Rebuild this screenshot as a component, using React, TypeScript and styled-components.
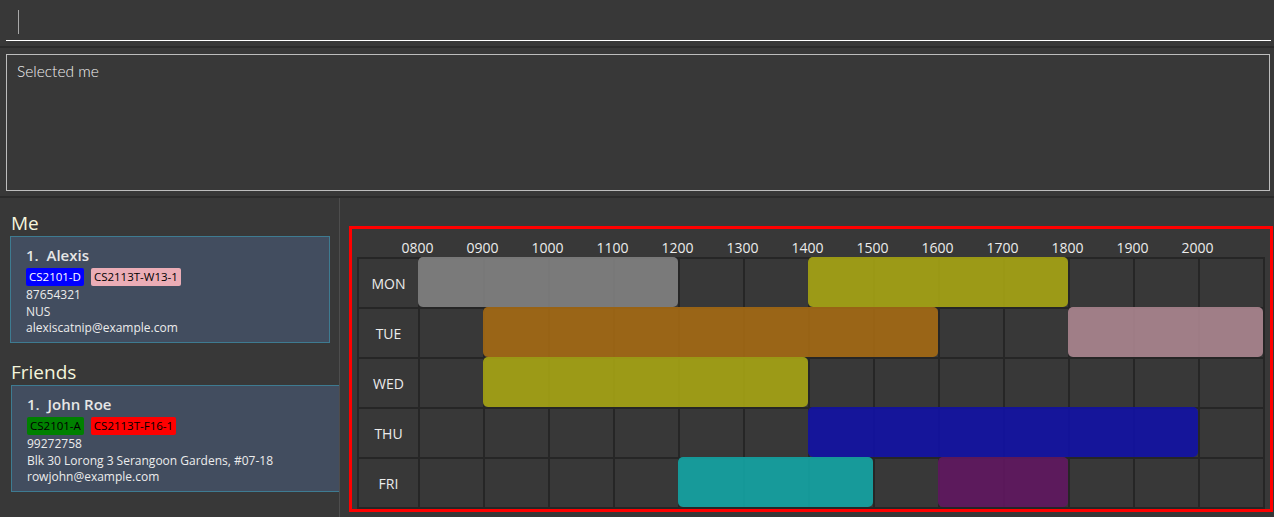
import React from "react";
import styled, { createGlobalStyle } from "styled-components";

interface Lesson {
  day: number;
  start: number;
  end: number;
  color: string;
}

interface Person {
  name: string;
  tags: { label: string; bg: string; fg: string }[];
  lines: string[];
}

const days = ["MON", "TUE", "WED", "THU", "FRI"];
const hours = [8, 9, 10, 11, 12, 13, 14, 15, 16, 17, 18, 19, 20];

const lessons: Lesson[] = [
  { day: 0, start: 8, end: 12, color: "rgba(130, 130, 130, 0.9)" },
  { day: 0, start: 14, end: 18, color: "rgba(167, 165, 20, 0.9)" },
  { day: 1, start: 9, end: 16, color: "rgba(165, 106, 20, 0.9)" },
  { day: 1, start: 18, end: 21, color: "rgba(172, 134, 144, 0.9)" },
  { day: 2, start: 9, end: 14, color: "rgba(167, 165, 20, 0.9)" },
  { day: 3, start: 14, end: 20, color: "rgba(18, 18, 165, 0.9)" },
  { day: 4, start: 12, end: 15, color: "rgba(20, 165, 165, 0.9)" },
  { day: 4, start: 16, end: 18, color: "rgba(96, 23, 96, 0.9)" },
];

const me: Person = {
  name: "Alexis",
  tags: [
    { label: "CS2101-D", bg: "#0000ff", fg: "#ffffff" },
    { label: "CS2113T-W13-1", bg: "#ebadb6", fg: "#000000" },
  ],
  lines: ["87654321", "NUS", "alexiscatnip@example.com"],
};

const friends: Person[] = [
  {
    name: "John Roe",
    tags: [
      { label: "CS2101-A", bg: "#008000", fg: "#000000" },
      { label: "CS2113T-F16-1", bg: "#ff0000", fg: "#000000" },
    ],
    lines: [
      "99272758",
      "Blk 30 Lorong 3 Serangoon Gardens, #07-18",
      "rowjohn@example.com",
    ],
  },
];

const pad = (h: number) => (h < 10 ? "0" + h : "" + h) + "00";

const PersonCard: React.FC<{ person: Person; index: number; wide?: boolean }> = ({
  person,
  index,
  wide,
}) => (
  <Card $wide={wide}>
    <Name>
      {index}.&nbsp;&nbsp;{person.name}
    </Name>
    <Tags>
      {person.tags.map((t) => (
        <Tag key={t.label} $bg={t.bg} $fg={t.fg}>
          {t.label}
        </Tag>
      ))}
    </Tags>
    {person.lines.map((l) => (
      <Detail key={l}>{l}</Detail>
    ))}
  </Card>
);

const App: React.FC = () => {
  return (
    <>
      <GlobalStyle />
      <Window>
        <CommandPane>
          <CommandField>
            <Caret />
          </CommandField>
        </CommandPane>
        <Separator />
        <ResultPane>
          <ResultBox>Selected me</ResultBox>
        </ResultPane>
        <Separator />
        <Split>
          <LeftPane>
            <SectionTitle>Me</SectionTitle>
            <PersonCard person={me} index={1} />
            <SectionTitle $gap>Friends</SectionTitle>
            {friends.map((f, i) => (
              <PersonCard key={f.name} person={f} index={i + 1} wide />
            ))}
          </LeftPane>
          <RightPane>
            <Timetable>
              <HourRow>
                {hours.map((h) => (
                  <HourLabel key={h}>{pad(h)}</HourLabel>
                ))}
              </HourRow>
              <Grid>
                {days.map((d, r) => (
                  <React.Fragment key={d}>
                    <DayCell style={{ gridRow: r + 1, gridColumn: 1 }}>{d}</DayCell>
                    {hours.map((h, c) => (
                      <Cell key={h} style={{ gridRow: r + 1, gridColumn: c + 2 }} />
                    ))}
                  </React.Fragment>
                ))}
                {lessons.map((l, i) => (
                  <LessonBlock
                    key={i}
                    style={{
                      gridRow: l.day + 1,
                      gridColumn: `${l.start - 6} / ${l.end - 6}`,
                      background: l.color,
                    }}
                  />
                ))}
              </Grid>
            </Timetable>
          </RightPane>
        </Split>
      </Window>
    </>
  );
};

export default App;

const GlobalStyle = createGlobalStyle`
  html, body {
    margin: 0;
    padding: 0;
    background: #383838;
  }
  body {
    font-family: "Open Sans", "Noto Sans", sans-serif;
    color: #ececec;
  }
`;

const Window = styled.div`
  width: 1274px;
  height: 517px;
  display: flex;
  flex-direction: column;
  background: #383838;
  overflow: hidden;
`;

const CommandPane = styled.div`
  height: 46px;
  padding: 0 3px 0 6px;
`;

const CommandField = styled.div`
  height: 41px;
  border-bottom: 1px solid #ffffff;
  padding: 10px 0 0 12px;
  box-sizing: border-box;
`;

const Caret = styled.div`
  width: 1px;
  height: 24px;
  background: #a8a8a8;
`;

const Separator = styled.div`
  height: 2px;
  background: #2b2b2b;
`;

const ResultPane = styled.div`
  height: 148px;
  padding: 6px 4px 0 6px;
  box-sizing: border-box;
`;

const ResultBox = styled.div`
  height: 137px;
  box-sizing: border-box;
  border: 1px solid #bdbdbd;
  padding: 7px 10px;
  font-family: "Lato", "Open Sans", sans-serif;
  font-weight: 300;
  font-size: 15.5px;
  color: #f2f2f2;
`;

const Split = styled.div`
  flex: 1;
  display: flex;
  min-height: 0;
`;

const LeftPane = styled.div`
  width: 340px;
  flex: none;
  border-right: 1px solid #4d4d4d;
  overflow: hidden;
  padding: 12px 0 0 10px;
  box-sizing: border-box;
`;

const SectionTitle = styled.div<{ $gap?: boolean }>`
  font-size: 19px;
  line-height: 26px;
  color: #f5f5dc;
  padding-left: 1px;
  margin-top: ${(p) => (p.$gap ? "16px" : "0")};
`;

const Card = styled.div<{ $wide?: boolean }>`
  width: ${(p) => (p.$wide ? "340px" : "320px")};
  margin-left: ${(p) => (p.$wide ? "1px" : "0")};
  height: 107px;
  box-sizing: border-box;
  background: #424d5f;
  border: 1px solid #3e7b91;
  padding: 8px 0 0 15px;
`;

const Name = styled.div`
  font-size: 15px;
  font-weight: 600;
  line-height: 20px;
  color: #e6e6e6;
`;

const Tags = styled.div`
  display: flex;
  gap: 7px;
  margin: 3px 0 1px;
`;

const Tag = styled.span<{ $bg: string; $fg: string }>`
  background: ${(p) => p.$bg};
  color: ${(p) => p.$fg};
  font-size: 11.5px;
  line-height: 18px;
  padding: 0 3px;
  border-radius: 2px;
`;

const Detail = styled.div`
  font-size: 12px;
  line-height: 16.5px;
  color: #ececec;
`;

const RightPane = styled.div`
  flex: 1;
  padding: 28px 1px 5px 9px;
  box-sizing: border-box;
  display: flex;
`;

const Timetable = styled.div`
  flex: 1;
  border: 3px solid #ff0000;
  padding: 0 0 0 5px;
  display: flex;
  flex-direction: column;
`;

const HourRow = styled.div`
  display: flex;
  height: 30px;
  padding: 10px 0 0 28px;
  box-sizing: border-box;
`;

const HourLabel = styled.div`
  width: 65px;
  text-align: center;
  font-size: 14px;
  line-height: 18px;
  color: #ececec;
`;

const Grid = styled.div`
  display: grid;
  grid-template-columns: 61px repeat(13, 65px);
  grid-template-rows: repeat(5, 50px);
  width: max-content;
  border-right: 2px solid #262626;
  border-bottom: 2px solid #262626;
`;

const Cell = styled.div`
  border-left: 2px solid #262626;
  border-top: 2px solid #262626;
  background: #383838;
`;

const DayCell = styled(Cell)`
  display: flex;
  align-items: center;
  justify-content: center;
  font-size: 14px;
  color: #ececec;
`;

const LessonBlock = styled.div`
  border-radius: 5px;
  z-index: 1;
`;
